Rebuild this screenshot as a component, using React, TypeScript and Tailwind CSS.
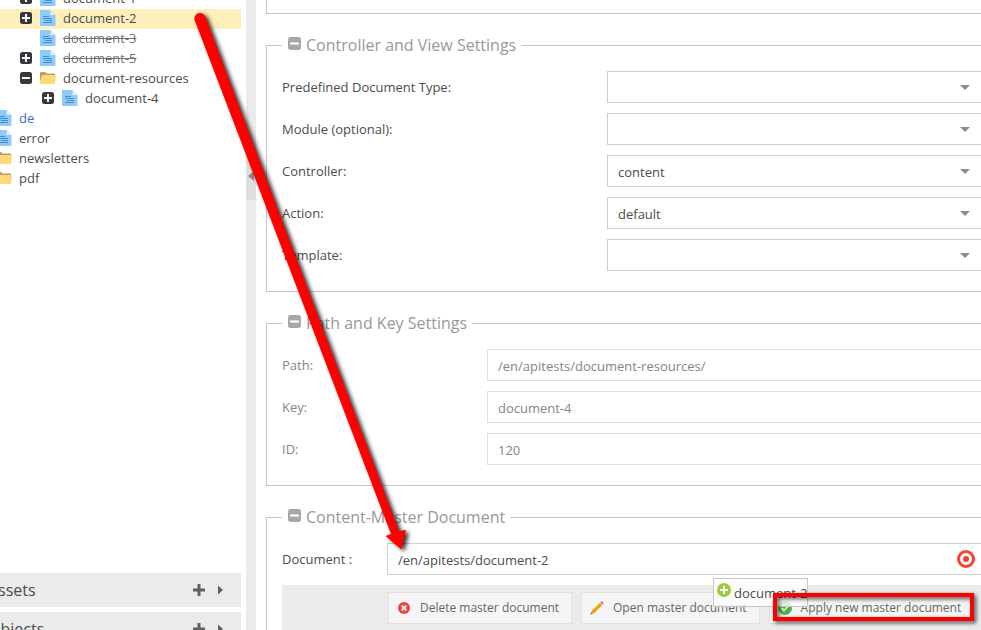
import type { ReactNode } from 'react';

type TreeNode = {
  label: string;
  indent: string;
  icon: 'page' | 'folder';
  toggle?: 'plus' | 'minus';
  className?: string;
  selected?: boolean;
};

const TREE: TreeNode[] = [
  { label: 'document-1', indent: 'pl-11', icon: 'page', toggle: 'plus' },
  { label: 'document-2', indent: 'pl-11', icon: 'page', toggle: 'plus', selected: true },
  { label: 'document-3', indent: 'pl-11', icon: 'page', className: 'line-through opacity-80' },
  { label: 'document-5', indent: 'pl-11', icon: 'page', toggle: 'plus', className: 'line-through opacity-80' },
  { label: 'document-resources', indent: 'pl-11', icon: 'folder', toggle: 'minus' },
  { label: 'document-4', indent: 'pl-[66px]', icon: 'page', toggle: 'plus' },
  { label: 'de', indent: 'pl-0', icon: 'page', className: 'text-[#3b6dc7]' },
  { label: 'error', indent: 'pl-0', icon: 'page' },
  { label: 'newsletters', indent: 'pl-0', icon: 'folder' },
  { label: 'pdf', indent: 'pl-0', icon: 'folder' },
];

const VIEW_FIELDS = [
  { id: 'docType', label: 'Predefined Document Type:', value: '' },
  { id: 'module', label: 'Module (optional):', value: '' },
  { id: 'controller', label: 'Controller:', value: 'content' },
  { id: 'action', label: 'Action:', value: 'default' },
  { id: 'template', label: 'Template:', value: '' },
];

const PATH_FIELDS = [
  { id: 'path', label: 'Path:', value: '/en/apitests/document-resources/' },
  { id: 'key', label: 'Key:', value: 'document-4' },
  { id: 'docId', label: 'ID:', value: '120' },
];

function PageIcon() {
  return (
    <svg className="h-4 w-4 shrink-0" viewBox="0 0 16 16" aria-hidden="true">
      <path d="M0 0h10.500l5 5v11H0z" fill="#90caf9" />
      <path d="M10.500 0.500v4.500h4.500z" fill="#e1f5fe" />
      <path d="M3 6.500h6M3 8.500h9M5 10.500h7M3 12.500h9" stroke="#3d8fdc" strokeWidth="1" />
    </svg>
  );
}

function FolderIcon() {
  return (
    <svg className="h-4 w-4 shrink-0" viewBox="0 0 16 16" aria-hidden="true">
      <path d="M0 3q0-1 1-1h4l1.500 1.500H14q1 0 1 1V13H0z" fill="#c49a62" />
      <path d="M3 5h12.500q.6 0 .5.700L15 13q-.2 1-1 1H1q-1 0-1-1V11L2 5.700Q2.300 5 3 5z" fill="#ffd978" />
    </svg>
  );
}

function ToggleIcon({ kind, className }: { kind: 'plus' | 'minus'; className: string }) {
  return (
    <svg className={`shrink-0 ${className}`} viewBox="0 0 12 12" aria-hidden="true">
      <rect width="12" height="12" rx="2.500" fill="currentColor" />
      <path d={kind === 'plus' ? 'M2 6h8M6 2v8' : 'M2 6h8'} stroke="#fff" strokeWidth="2" />
    </svg>
  );
}

function TreeRow({ node }: { node: TreeNode }) {
  return (
    <li className={`flex h-5 items-center pb-0.5 ${node.indent} ${node.selected ? 'bg-[#ffefbb]' : ''}`}>
      <span className="flex w-[22px] shrink-0 pl-0.5">
        {node.toggle && (
          <button type="button" aria-label={`Toggle ${node.label}`}>
            <ToggleIcon kind={node.toggle} className="h-3 w-3 text-[#35393d]" />
          </button>
        )}
      </span>
      {node.icon === 'page' ? <PageIcon /> : <FolderIcon />}
      <span className={`pl-[7px] ${node.className ?? ''}`}>{node.label}</span>
    </li>
  );
}

function PanelHeader({ title }: { title: string }) {
  return (
    <div className="flex h-[34px] items-center bg-[#ebebeb] pr-3">
      <h2 className="-ml-3 flex-1 text-base">{title}</h2>
      <button type="button" aria-label={`Add to ${title}`}>
        <svg className="h-3 w-3" viewBox="0 0 12 12">
          <path d="M0 6h12M6 0v12" stroke="#606060" strokeWidth="3" />
        </svg>
      </button>
      <button type="button" aria-label={`Expand ${title}`} className="ml-3">
        <svg className="h-3 w-3" viewBox="0 0 12 12">
          <path d="M1 1.500l5 4.500-5 4.500z" fill="#606060" />
        </svg>
      </button>
    </div>
  );
}

function Section({ title, children }: { title: string; children: ReactNode }) {
  return (
    <fieldset className="mt-5 min-w-0 border border-r-0 border-[#c6c6c6] pb-2.5 pl-[15px]">
      <legend className="flex h-[22px] gap-[5px] pr-[5px] pl-1.5 text-base leading-[22px] text-[#999]">
        <button type="button" aria-label={`Collapse ${title}`} className="mt-[3px] self-start">
          <ToggleIcon kind="minus" className="h-[13px] w-[13px] text-[#a8a8a8]" />
        </button>
        {title}
      </legend>
      <div className="pt-[15px]">{children}</div>
    </fieldset>
  );
}

function ToolbarButton({ icon, children }: { icon: ReactNode; children: ReactNode }) {
  return (
    <button
      type="button"
      className="flex h-8 shrink-0 items-center gap-[9px] border border-[#e2e2e2] bg-[#f5f5f5] pr-3 pl-2 text-xs text-[#666]"
    >
      {icon}
      {children}
    </button>
  );
}

export default function App() {
  return (
    <div className="relative flex h-screen overflow-hidden bg-white font-['Open_Sans',sans-serif] text-[13px] leading-5 text-[#4c4c4c]">
      <aside className="flex w-[241px] shrink-0 flex-col overflow-hidden">
        <ul className="-mt-[11px] -ml-[26px] flex-1">
          {TREE.map((node) => (
            <TreeRow key={node.label} node={node} />
          ))}
        </ul>
        <div className="-mb-4 flex flex-col gap-[5px]">
          <PanelHeader title="Assets" />
          <PanelHeader title="Objects" />
        </div>
      </aside>

      <div className="ml-[5px] flex w-2.5 shrink-0 flex-col bg-[#ebebeb]">
        <button type="button" aria-label="Collapse sidebar" className="mt-[152px] flex h-12 items-center bg-[#dedede] pl-0.5">
          <svg className="h-2.5 w-1.5" viewBox="0 0 6 10">
            <path d="M6 0v10L0 5z" fill="#888" />
          </svg>
        </button>
      </div>

      <main className="min-w-0 flex-1 overflow-hidden pl-2.5">
        <div className="h-3.5 border-b border-l border-[#c6c6c6]" />

        <Section title="Controller and View Settings">
          {VIEW_FIELDS.map((field) => (
            <div key={field.id} className="mb-2.5 flex h-8 items-center">
              <label htmlFor={field.id} className="w-[325px] shrink-0">{field.label}</label>
              <div className="relative h-8 flex-1">
                <select
                  id={field.id}
                  defaultValue={field.value}
                  className="h-full w-full appearance-none border border-r-0 border-[#cecece] bg-white pt-0.5 pl-2.5"
                >
                  <option value={field.value}>{field.value}</option>
                </select>
                <svg className="pointer-events-none absolute top-3.5 right-[11px] h-[5px] w-2.5" viewBox="0 0 10 5" aria-hidden="true">
                  <path d="M0 0h10L5 5z" fill="#8c8c8c" />
                </svg>
              </div>
            </div>
          ))}
        </Section>

        <Section title="Path and Key Settings">
          {PATH_FIELDS.map((field) => (
            <div key={field.id} className="mb-2.5 flex h-8 items-center text-[#858585]">
              <label htmlFor={field.id} className="w-[205px] shrink-0">{field.label}</label>
              <input
                id={field.id}
                type="text"
                readOnly
                defaultValue={field.value}
                className="h-full min-w-0 flex-1 border border-r-0 border-[#dedede] pt-0.5 pl-2.5"
              />
            </div>
          ))}
        </Section>

        <Section title="Content-Master Document">
          <div className="mb-2.5 flex h-8 items-center">
            <label htmlFor="master" className="w-[105px] shrink-0">Document :</label>
            <div className="flex h-full min-w-0 flex-1 items-center border border-r-0 border-[#cecece] pr-1.5">
              <input
                id="master"
                type="text"
                defaultValue="/en/apitests/document-2"
                className="h-full min-w-0 flex-1 pt-0.5 pl-2.5 outline-none"
              />
              <svg className="h-[18px] w-[18px]" viewBox="0 0 18 18" aria-hidden="true">
                <circle cx="9" cy="9" r="7.500" fill="none" stroke="#f44336" strokeWidth="3" />
                <circle cx="9" cy="9" r="3" fill="#f44336" />
              </svg>
            </div>
          </div>
          <div className="flex gap-[9px] bg-[#ebebeb] pt-[7px] pb-2 pl-[106px] whitespace-nowrap">
            <ToolbarButton
              icon={
                <svg className="h-3.5 w-3.5" viewBox="0 0 14 14" aria-hidden="true">
                  <circle cx="7" cy="7" r="6" fill="#f44336" />
                  <path d="M4.800 4.800l4.400 4.400M9.200 4.800l-4.400 4.400" stroke="#fff" strokeWidth="2" />
                </svg>
              }
            >
              Delete master document
            </ToolbarButton>
            <ToolbarButton
              icon={
                <svg className="h-3.5 w-3.5" viewBox="0 0 14 14" aria-hidden="true">
                  <path d="M0.500 13.500l1.200-3.500L9.500 2.200l2.300 2.300L4 12.300z" fill="#ff9800" />
                  <path d="M0.500 13.500l.6-1.800 1.200 1.200z" fill="#455a64" />
                  <path d="M9.500 2.200l1-1 2.300 2.300-1 1z" fill="#b0bec5" />
                  <path d="M10.500 1.200l.6-.6q.6-.6 1.300 0l1 1q.6.700 0 1.300l-.6.600z" fill="#e57373" />
                </svg>
              }
            >
              Open master document
            </ToolbarButton>
            <ToolbarButton
              icon={
                <svg className="h-3.5 w-3.5" viewBox="0 0 14 14" aria-hidden="true">
                  <circle cx="7" cy="7" r="7" fill="#4caf50" />
                  <path d="M3.500 7l2.500 2.500 4.800-5" fill="none" stroke="#ccff90" strokeWidth="1.800" />
                </svg>
              }
            >
              Apply new master document
            </ToolbarButton>
          </div>
        </Section>
      </main>

      {/* drag proxy */}
      <div className="absolute top-[578px] left-[713px] flex h-[29px] w-[95px] border border-[#c6c6c6] bg-white/80 pt-1 pl-[3px] whitespace-nowrap">
        <svg className="h-3.5 w-3.5 shrink-0" viewBox="0 0 14 14" aria-hidden="true">
          <circle cx="7" cy="7" r="7" fill="#9ccc3c" />
          <path d="M3 7h8M7 3v8" stroke="#fff" strokeWidth="2" />
        </svg>
        <span className="pl-[3px]">document-2</span>
      </div>

      {/* annotations */}
      <div className="pointer-events-none absolute top-[593px] left-[773px] h-7 w-[201px] border-4 border-[#fe0000] drop-shadow-[2px_2px_2px_rgba(0,0,0,0.7)]" />
      <svg
        className="pointer-events-none absolute top-0 left-0 h-[570px] w-[430px] drop-shadow-[3px_2px_2px_rgba(0,0,0,0.8)]"
        viewBox="0 0 430 570"
        aria-hidden="true"
      >
        <path d="M194.800 20.500A5.500 5.500 0 0 1 205.200 16.500L399 531l7-1-4.500 19.500L385.500 536l5.500-2z" fill="#fe0000" />
      </svg>
    </div>
  );
}
